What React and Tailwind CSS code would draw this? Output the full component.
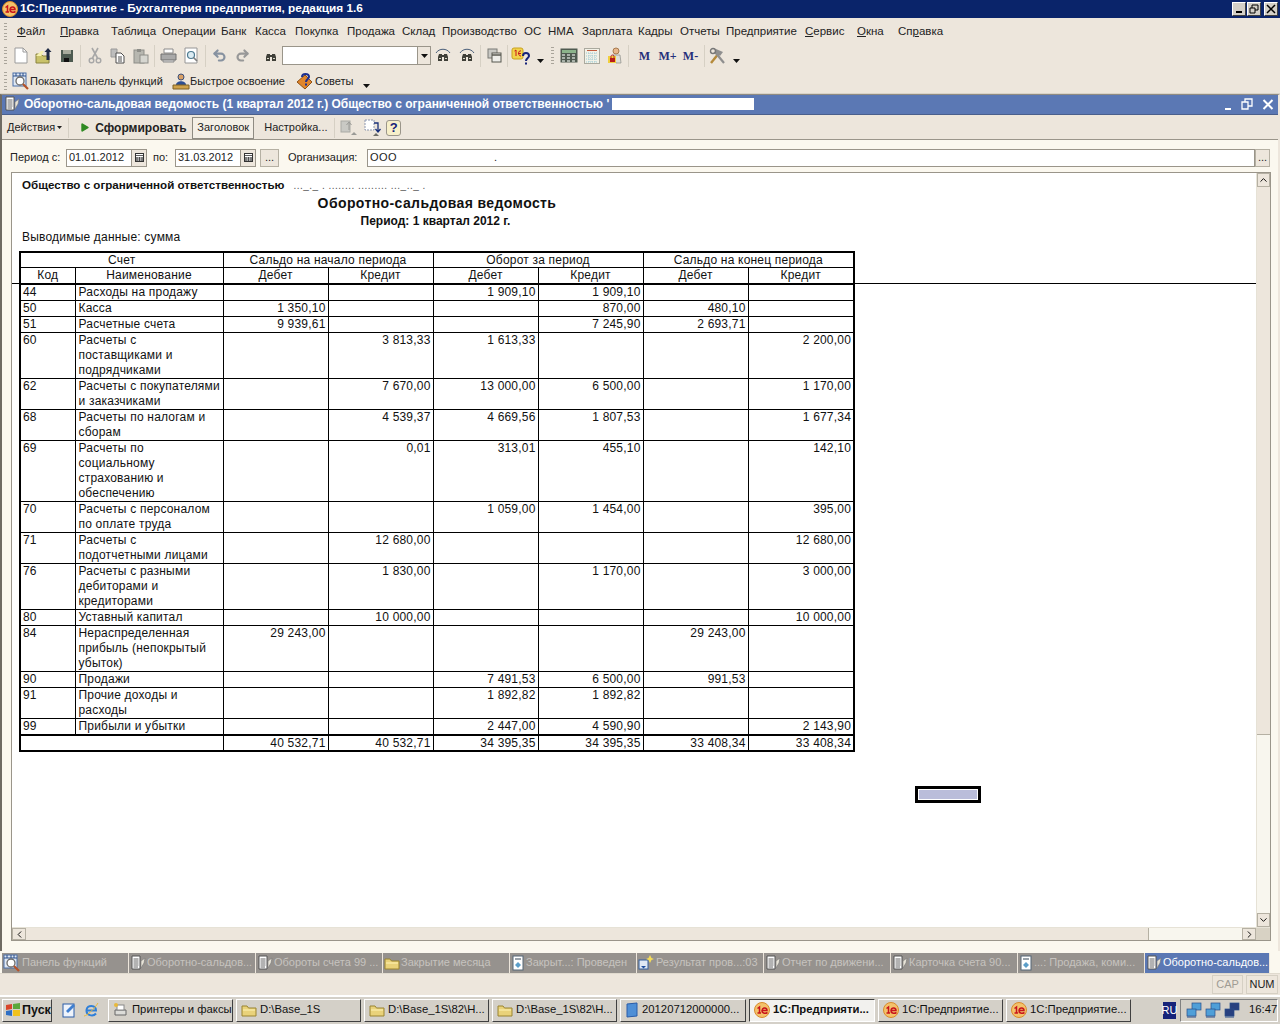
import { Undo2, Redo2, ChevronUp, ChevronDown, ChevronLeft, ChevronRight, Play } from "lucide-react";

const menu = [
  { label: "Файл", u: 0, w: "w-[43px]" },
  { label: "Правка", u: 0, w: "w-[51px]" },
  { label: "Таблица", w: "w-[51px]" },
  { label: "Операции", w: "w-[59px]" },
  { label: "Банк", w: "w-[34px]" },
  { label: "Касса", w: "w-[40px]" },
  { label: "Покупка", w: "w-[52px]" },
  { label: "Продажа", w: "w-[55px]" },
  { label: "Склад", w: "w-[40px]" },
  { label: "Производство", w: "w-[82px]" },
  { label: "ОС", w: "w-[24px]" },
  { label: "НМА", w: "w-[34px]" },
  { label: "Зарплата", w: "w-[56px]" },
  { label: "Кадры", w: "w-[42px]" },
  { label: "Отчеты", w: "w-[46px]" },
  { label: "Предприятие", w: "w-[79px]" },
  { label: "Сервис", u: 0, w: "w-[52px]" },
  { label: "Окна", u: 0, w: "w-[41px]" },
  { label: "Справка", u: 2, w: "w-[60px]" },
];

const rows = [
  ["44", "Расходы на продажу", "", "", "1 909,10", "1 909,10", "", "", "h-[16px]"],
  ["50", "Касса", "1 350,10", "", "", "870,00", "480,10", "", "h-[16px]"],
  ["51", "Расчетные счета", "9 939,61", "", "", "7 245,90", "2 693,71", "", "h-[16px]"],
  ["60", "Расчеты с\nпоставщиками и\nподрядчиками", "", "3 813,33", "1 613,33", "", "", "2 200,00", "h-[46px]"],
  ["62", "Расчеты с покупателями\nи заказчиками", "", "7 670,00", "13 000,00", "6 500,00", "", "1 170,00", "h-[31px]"],
  ["68", "Расчеты по налогам и\nсборам", "", "4 539,37", "4 669,56", "1 807,53", "", "1 677,34", "h-[31px]"],
  ["69", "Расчеты по\nсоциальному\nстрахованию и\nобеспечению", "", "0,01", "313,01", "455,10", "", "142,10", "h-[61px]"],
  ["70", "Расчеты с персоналом\nпо оплате труда", "", "", "1 059,00", "1 454,00", "", "395,00", "h-[31px]"],
  ["71", "Расчеты с\nподотчетными лицами", "", "12 680,00", "", "", "", "12 680,00", "h-[31px]"],
  ["76", "Расчеты с разными\nдебиторами и\nкредиторами", "", "1 830,00", "", "1 170,00", "", "3 000,00", "h-[46px]"],
  ["80", "Уставный капитал", "", "10 000,00", "", "", "", "10 000,00", "h-[16px]"],
  ["84", "Нераспределенная\nприбыль (непокрытый\nубыток)", "29 243,00", "", "", "", "29 243,00", "", "h-[46px]"],
  ["90", "Продажи", "", "", "7 491,53", "6 500,00", "991,53", "", "h-[16px]"],
  ["91", "Прочие доходы и\nрасходы", "", "", "1 892,82", "1 892,82", "", "", "h-[31px]"],
  ["99", "Прибыли и убытки", "", "", "2 447,00", "4 590,90", "", "2 143,90", "h-[16px]"],
];

const totals = ["40 532,71", "40 532,71", "34 395,35", "34 395,35", "33 408,34", "33 408,34"];

const tabs = [
  { label: "Панель функций", icon: "panel" },
  { label: "Оборотно-сальдов...", icon: "doc" },
  { label: "Обороты счета 99 ...", icon: "doc" },
  { label: "Закрытие месяца", icon: "folder" },
  { label: "Закрыт...: Проведен", icon: "calc" },
  { label: "Результат пров...:03", icon: "star" },
  { label: "Отчет по движени...", icon: "doc" },
  { label: "Карточка счета 90...", icon: "doc" },
  { label: "...: Продажа, коми...", icon: "calc" },
  { label: "Оборотно-сальдов...", icon: "doc", active: true },
];

const raised = "border border-t-white border-l-white border-r-[#404040] border-b-[#404040] bg-[#d4d0c8]";

function Logo1C({ size = 16 }) {
  return (
    <svg width={size} height={size} viewBox="0 0 16 16" className="shrink-0">
      <circle cx="8" cy="8" r="7.5" fill="#f3c26a" stroke="#d98a2b" />
      <path d="M3.5 6.5 L5.5 5 V11 M3.5 11 H7" stroke="#c8141c" strokeWidth="1.5" fill="none" />
      <path d="M7.5 8.5 H13 C13 5.5 8.5 5 8 8.5 C7.7 11 11 12 13.5 10.5" stroke="#c8141c" strokeWidth="1.5" fill="none" />
    </svg>
  );
}

function DocIcon() {
  return (
    <svg width="16" height="16" viewBox="0 0 16 16" className="shrink-0">
      <path d="M2 1 H10 V14 H2 Z" fill="#fff" stroke="#555" />
      <path d="M3.5 4 H8.5 M3.5 6 H8.5 M3.5 8 H8.5 M3.5 10 H8.5 M3.5 12 H8" stroke="#666" />
      <path d="M11 6 L15 3 L14 8 L11 13 Z" fill="#e8e4d8" stroke="#777" strokeWidth="0.6" />
    </svg>
  );
}

function PanelIcon() {
  return (
    <svg width="18" height="18" viewBox="0 0 18 18" className="shrink-0">
      <rect x="1" y="1" width="13" height="13" fill="#dfe8f4" stroke="#4a6fa8" />
      <path d="M1 4 H14 M4 1 V4 M8 1 V4 M11 1 V4" stroke="#2b4f8a" />
      <circle cx="8" cy="9" r="4" fill="#fff" stroke="#6a6a6a" strokeWidth="1.3" />
      <path d="M11 12 L16 17" stroke="#b5532a" strokeWidth="2.2" />
    </svg>
  );
}

function FolderIcon({ className = "" }) {
  return (
    <svg width="16" height="14" viewBox="0 0 16 14" className={"shrink-0 " + className}>
      <path d="M1 3 H6 L7.5 5 H15 V13 H1 Z" fill="#e9d27a" stroke="#9a8430" />
      <path d="M2 7 H14" stroke="#fff3b5" />
    </svg>
  );
}

function CalcTabIcon() {
  return (
    <svg width="14" height="16" viewBox="0 0 14 16" className="shrink-0">
      <rect x="2" y="1" width="10" height="14" fill="#fff" stroke="#567" />
      <path d="M4 4 H10" stroke="#345" />
      <path d="M7 7 L10 10 L7 13 L4 10 Z" fill="#5b9ec9" />
    </svg>
  );
}

function StarIcon() {
  return (
    <svg width="17" height="17" viewBox="0 0 17 17" className="shrink-0">
      <rect x="1" y="6" width="9" height="9" fill="#dfe8f4" stroke="#345f9a" />
      <path d="M3 12 L5.5 14.5 L8 12 Z" fill="#1f4f9f" />
      <path d="M12 1 L13.5 4 L16 5 L13.5 6 L12 9 L10.5 6 L8 5 L10.5 4 Z" fill="#f5dc5a" />
    </svg>
  );
}

const tabIcons = {
  panel: <PanelIcon />,
  doc: <DocIcon />,
  folder: <FolderIcon />,
  calc: <CalcTabIcon />,
  star: <StarIcon />,
};

function Grip({ className = "" }) {
  return (
    <div className={"w-[3px] h-[18px] shrink-0 flex flex-col justify-between " + className}>
      {[0, 1, 2, 3, 4, 5].map((i) => (
        <div key={i} className="h-[1px] bg-[#a9a49a]" />
      ))}
    </div>
  );
}

function Sep() {
  return (
    <div className="w-[5px] h-[22px] shrink-0 flex justify-center">
      <div className="w-[1px] bg-[#d6d0c4]" />
    </div>
  );
}

function Slot({ children, w = "w-[23px]" }) {
  return <div className={"h-[24px] shrink-0 flex items-center justify-center " + w}>{children}</div>;
}

function DownArrow() {
  return (
    <svg width="7" height="4" viewBox="0 0 7 4" className="shrink-0 mt-[10px]">
      <path d="M0 0 H7 L3.5 4 Z" fill="#111" />
    </svg>
  );
}

function Binoculars({ arc }) {
  return (
    <svg width="16" height="16" viewBox="0 0 16 16">
      {arc && <path d="M1 5 C4 0 12 0 15 5" stroke="#4a5f7a" fill="none" />}
      <path d="M4 6 H7 V13 H3 V9 Z M9 6 H12 L13 9 V13 H9 Z" fill="#3f3f38" />
      <path d="M7 8 H9" stroke="#3f3f38" strokeWidth="2" />
      <path d="M4 10.5 H6 M10 10.5 H12" stroke="#d8d8c8" />
    </svg>
  );
}

function ToolbarMain() {
  return (
    <div className="h-[25px] flex items-center pl-[4px] bg-[#ede6dc]">
      <Grip className="mr-[2px]" />
      <Slot>
        <svg width="14" height="17" viewBox="0 0 14 17">
          <path d="M1 1 H9 L13 5 V16 H1 Z" fill="#fff" stroke="#9b9b9b" />
          <path d="M9 1 V5 H13" fill="none" stroke="#9b9b9b" />
        </svg>
      </Slot>
      <Slot>
        <svg width="18" height="17" viewBox="0 0 18 17">
          <path d="M1 7 H6 L8 9 H14 V16 H1 Z" fill="#c9c26a" stroke="#8a8440" />
          <path d="M1 9 L6 4 H9 L6 9 Z" fill="#f4f0b0" />
          <path d="M13 1 L16.5 5 H14.5 V13 H11.5 V5 H9.5 Z" fill="#1f2a44" />
        </svg>
      </Slot>
      <Slot>
        <svg width="14" height="14" viewBox="0 0 14 14">
          <rect x="1" y="1" width="12" height="12" fill="#4d5a50" />
          <rect x="3" y="1" width="8" height="4" fill="#a8ab9d" />
          <rect x="4" y="9" width="5" height="4" fill="#111" />
        </svg>
      </Slot>
      <Sep />
      <Slot>
        <svg width="14" height="17" viewBox="0 0 14 17">
          <path d="M4 1 L9.5 11 M10 1 L4.5 11" stroke="#a7a7a7" strokeWidth="1.6" />
          <circle cx="3.5" cy="13.5" r="2.3" fill="none" stroke="#a7a7a7" strokeWidth="1.4" />
          <circle cx="10.5" cy="13.5" r="2.3" fill="none" stroke="#a7a7a7" strokeWidth="1.4" />
        </svg>
      </Slot>
      <Slot>
        <svg width="16" height="16" viewBox="0 0 16 16">
          <path d="M1 1 H7 V9 H1 Z" fill="#bdbdbd" stroke="#9a9a9a" />
          <path d="M6 5 H11 L14 8 V15 H6 Z" fill="#fff" stroke="#4c4c4c" />
          <path d="M8 9 H12 M8 11 H12 M8 13 H12" stroke="#4c4c4c" />
        </svg>
      </Slot>
      <Slot>
        <svg width="16" height="16" viewBox="0 0 16 16">
          <rect x="1" y="2" width="10" height="13" fill="#b7b7b0" stroke="#8d8d88" />
          <rect x="4" y="1" width="4" height="3" fill="#8d8d88" />
          <rect x="7" y="7" width="8" height="8" fill="#d6d6d0" stroke="#8d8d88" />
        </svg>
      </Slot>
      <Sep />
      <Slot>
        <svg width="17" height="15" viewBox="0 0 17 15">
          <path d="M4 1 H13 V5 H4 Z" fill="#fff" stroke="#8a8a8a" />
          <path d="M1 6 H16 V12 H1 Z" fill="#a9a9a9" stroke="#707070" />
          <path d="M3 12 H14 V14 H3 Z" fill="#dadada" stroke="#8a8a8a" />
        </svg>
      </Slot>
      <Slot>
        <svg width="15" height="17" viewBox="0 0 15 17">
          <path d="M1 1 H13 V16 H1 Z" fill="#fff" stroke="#969696" />
          <circle cx="7" cy="8" r="3.5" fill="#dcecf3" stroke="#4d7a90" strokeWidth="1.2" />
          <path d="M9.5 10.5 L13 14" stroke="#7d7d7d" strokeWidth="1.6" />
        </svg>
      </Slot>
      <Sep />
      <Slot><Undo2 size={15} strokeWidth={3.4} className="text-[#8792a0]" /></Slot>
      <Slot><Redo2 size={15} strokeWidth={3.4} className="text-[#989898]" /></Slot>
      <div className="w-[5px] shrink-0" />
      <Slot><Binoculars /></Slot>
      <div className="w-[149px] h-[19px] shrink-0 flex bg-white border border-[#9a958a]">
        <div className="flex-1" />
        <div className="w-[13px] bg-[#ede6dc] border-l border-[#9a958a] flex items-center justify-center">
          <svg width="7" height="4" viewBox="0 0 7 4"><path d="M0 0 H7 L3.5 4 Z" fill="#111" /></svg>
        </div>
      </div>
      <Slot w="w-[24px]"><Binoculars arc="r" /></Slot>
      <Slot><Binoculars arc="l" /></Slot>
      <Sep />
      <Slot w="w-[22px]">
        <svg width="15" height="15" viewBox="0 0 15 15">
          <rect x="1" y="1" width="9" height="9" fill="#c9c9c4" stroke="#7b7b76" />
          <rect x="5" y="5" width="9" height="9" fill="#eeeeea" stroke="#57574f" />
          <path d="M5 7 H14" stroke="#57574f" strokeWidth="1.5" />
        </svg>
      </Slot>
      <Sep />
      <div className="w-[27px] shrink-0 flex items-center pl-[1px]">
        <svg width="20" height="18" viewBox="0 0 20 18">
          <rect x="1" y="1" width="11" height="11" rx="2" fill="#f1d34b" stroke="#c9a21e" />
          <path d="M3.5 4 L5 3 V9 M7 6.5 H10 M10 4 C7 3 6.5 9 10 9" stroke="#c8141c" fill="none" />
          <path d="M12 9 C12 5 18 5 18 9 C18 11 15 11 15 14" stroke="#16237a" strokeWidth="2" fill="none" />
          <rect x="14" y="15.5" width="2" height="2" fill="#16237a" />
        </svg>
      </div>
      <DownArrow />
      <div className="w-[7px] shrink-0" />
      <Grip />
      <div className="w-[3px] shrink-0" />
      <Slot>
        <svg width="18" height="15" viewBox="0 0 18 15">
          <rect x="0.5" y="0.5" width="17" height="14" fill="#4f5a50" />
          <rect x="2" y="2" width="14" height="3" fill="#8bb38a" />
          <path d="M2 7 H5 M7 7 H10 M12 7 H15 M2 10 H5 M7 10 H10 M12 10 H15 M2 13 H5 M7 13 H10 M12 13 H15" stroke="#c8cec6" strokeWidth="1.5" />
        </svg>
      </Slot>
      <Slot>
        <svg width="16" height="16" viewBox="0 0 16 16">
          <rect x="0.5" y="0.5" width="15" height="15" fill="#f2f1e7" stroke="#aaa99e" />
          <path d="M3 2.5 H13" stroke="#c05a3c" />
          <path d="M2 5 H14 M2 8 H14 M2 11 H14 M2 14 H14 M5 5 V14 M8 5 V14 M11 5 V14" stroke="#9ecbd4" strokeDasharray="1 1" />
        </svg>
      </Slot>
      <Slot>
        <svg width="15" height="17" viewBox="0 0 15 17">
          <circle cx="9" cy="4" r="3" fill="#e8b78c" stroke="#a77a4e" />
          <path d="M6 8 H13 L14 16 H9 Z" fill="#dfe0da" stroke="#8b8b85" strokeWidth="0.7" />
          <path d="M1 9 H9 V16 H1 Z" fill="#f1cf3d" />
          <rect x="3" y="11" width="5" height="4" fill="#b71c1c" />
          <path d="M4 11 V9.5 C4 7.5 7 7.5 7 9.5 V11" stroke="#b71c1c" fill="none" />
        </svg>
      </Slot>
      <Sep />
      <div className="ml-[2px] flex items-center shrink-0 font-['Liberation_Serif',serif] font-bold text-[12px] text-[#26307a] w-[69px]">
        <span className="w-[23px] text-center">M</span>
        <span className="w-[23px] text-center">M+</span>
        <span className="w-[23px] text-center">M-</span>
      </div>
      <Sep />
      <Slot w="w-[20px]">
        <svg width="18" height="18" viewBox="0 0 18 18">
          <path d="M3 16 L11 6" stroke="#b58a3a" strokeWidth="2.4" />
          <path d="M16 16 L7 5" stroke="#8f8f8f" strokeWidth="2.2" />
          <path d="M8 2 L15 5 L12 9 L7 5 Z" fill="#8f8f8f" />
          <circle cx="5" cy="4" r="2.5" fill="none" stroke="#777" strokeWidth="1.4" />
        </svg>
      </Slot>
      <div className="w-[6px] shrink-0" />
      <DownArrow />
    </div>
  );
}

function ToolbarFunctions() {
  return (
    <div className="h-[26px] flex items-center pl-[4px] pt-[1px] bg-[#ede6dc] border-b border-[#d9d3c8] text-[#222]">
      <Grip className="mr-[5px]" />
      <PanelIcon />
      <span className="w-[142px]">Показать панель функций</span>
      <svg width="18" height="17" viewBox="0 0 18 17" className="shrink-0">
        <circle cx="9" cy="4" r="3" fill="#d9a066" stroke="#3a4f7a" />
        <path d="M4 12 C4 7 14 7 14 12 Z" fill="#2d4f92" />
        <path d="M1 12 H17 V16 H1 Z" fill="#cfa24a" stroke="#7f6226" />
      </svg>
      <span className="w-[105px]">Быстрое освоение</span>
      <svg width="18" height="18" viewBox="0 0 18 18" className="shrink-0 ml-[1px]">
        <path d="M1 10 L9 3 L16 10 L9 17 Z" fill="#e0852c" stroke="#8f5216" />
        <path d="M6 5 C6 1 13 1 13 5 C13 7 10 7 10 10" stroke="#1d2f8f" strokeWidth="2" fill="none" />
        <rect x="9" y="11.5" width="2" height="2" fill="#1d2f8f" />
      </svg>
      <span className="ml-[1px]">Советы</span>
      <div className="w-[10px]" />
      <DownArrow />
    </div>
  );
}

function ReportTable() {
  const cell = "border border-black px-[2px] align-top whitespace-pre";
  const num = cell + " text-right";
  const head = "border border-black font-normal text-center align-middle leading-[14px]";
  return (
    <table className="table-fixed w-[836px] border-collapse border-2 border-black leading-[15px] ml-[-3px]">
      <colgroup>
        <col className="w-[55px]" />
        <col className="w-[148px]" />
        <col className="w-[105px]" />
        <col className="w-[105px]" />
        <col className="w-[105px]" />
        <col className="w-[105px]" />
        <col className="w-[105px]" />
        <col className="w-[106px]" />
      </colgroup>
      <thead>
        <tr className="h-[14px]">
          <th colSpan={2} className={head}>Счет</th>
          <th colSpan={2} className={head}>Сальдо на начало периода</th>
          <th colSpan={2} className={head}>Оборот за период</th>
          <th colSpan={2} className={head}>Сальдо на конец периода</th>
        </tr>
        <tr className="h-[16px]">
          <th className={head + " border-b-2"}>Код</th>
          <th className={head + " border-b-2"}>Наименование</th>
          <th className={head + " border-b-2"}>Дебет</th>
          <th className={head + " border-b-2"}>Кредит</th>
          <th className={head + " border-b-2"}>Дебет</th>
          <th className={head + " border-b-2"}>Кредит</th>
          <th className={head + " border-b-2"}>Дебет</th>
          <th className={head + " border-b-2"}>Кредит</th>
        </tr>
      </thead>
      <tbody>
        {rows.map((r) => (
          <tr key={r[0]} className={r[8]}>
            <td className={cell}>{r[0]}</td>
            <td className={cell + " pl-[3px]"}>{r[1]}</td>
            {r.slice(2, 8).map((v, i) => (
              <td key={i} className={num}>{v}</td>
            ))}
          </tr>
        ))}
        <tr className="h-[15px]">
          <td colSpan={2} className={cell + " border-t-2"}></td>
          {totals.map((v, i) => (
            <td key={i} className={num + " border-t-2 leading-[14px]"}>{v}</td>
          ))}
        </tr>
      </tbody>
    </table>
  );
}

function ChildWindow() {
  return (
    <div className="h-[857px] flex flex-col border-l-2 border-[#6f6b63] border-t border-t-[#8f8b82] border-r-2 border-r-[#ede6dc] bg-[#fbf8ef]">
      <div className="h-[20px] shrink-0 flex items-center pb-[1px] bg-[#5b78b4] text-white font-bold text-[12px] border-b border-[#4a5f8c]">
        <div className="ml-[2px]"><DocIcon /></div>
        <span className="ml-[4px] whitespace-nowrap w-[590px]">Оборотно-сальдовая ведомость (1 квартал 2012 г.) Общество с ограниченной ответственностью '</span>
        <div className="w-[142px] h-[12px] bg-white ml-[-2px]" />
        <div className="flex-1" />
        <svg width="58" height="14" viewBox="0 0 58 14" className="mr-[2px] shrink-0">
          <path d="M7 12 H13" stroke="#fff" strokeWidth="2" />
          <path d="M24 5 H30 V12 H24 Z M27 5 V2 H34 V9 H30" fill="none" stroke="#fff" strokeWidth="1.3" />
          <path d="M45.5 3 L54.5 12 M54.5 3 L45.5 12" stroke="#fff" strokeWidth="2" />
        </svg>
      </div>
      <div className="h-[25px] shrink-0 flex items-center pt-[1px] bg-[#ede6dc] border-b border-[#9a958a] text-[#222]">
        <span className="ml-[5px]">Действия</span>
        <svg width="5" height="3" viewBox="0 0 5 3" className="ml-[2px]"><path d="M0 0 H5 L2.5 3 Z" fill="#222" /></svg>
        <div className="w-[1px] h-[20px] bg-[#d6d0c4] ml-[6px]" />
        <Play size={11} fill="#2f8a22" strokeWidth={0} className="ml-[10px] text-[#2f8a22]" />
        <span className="ml-[5px] w-[92px] font-bold text-[12px]">Сформировать</span>
        <div className="ml-[5px] w-[62px] h-[22px] border border-[#8f8b82] bg-[#f4efe6] flex items-center justify-center">Заголовок</div>
        <span className="ml-[10px] w-[70px]">Настройка...</span>
        <div className="w-[1px] h-[20px] bg-[#d6d0c4]" />
        <svg width="18" height="18" viewBox="0 0 18 18" className="ml-[5px]">
          <rect x="1" y="2" width="9" height="11" fill="#c9c9c4" stroke="#a9a9a4" />
          <path d="M9 11 V4 M6.5 6 L9 3 L11.5 6" stroke="#9a9a96" fill="none" />
          <path d="M11 16 H17 L14 13 Z" fill="#9a9a96" />
        </svg>
        <svg width="18" height="18" viewBox="0 0 18 18" className="ml-[6px]">
          <rect x="1" y="1" width="9" height="10" fill="#fff" stroke="#8c97b0" strokeDasharray="2 1" />
          <path d="M10 4 H14 V12 M11.5 10 L14 13 L16.5 10" stroke="#18307a" fill="none" strokeWidth="1.3" />
          <path d="M9 17 H15 L12 14 Z" fill="#6d6d66" />
        </svg>
        <div className="ml-[4px] w-[15px] h-[16px] rounded-[3px] border border-[#9a958a] bg-[#f7efc9] flex items-center justify-center font-bold text-[#16237a] text-[13px]">?</div>
      </div>
      <div className="h-[32px] shrink-0 flex items-center pt-[3px] text-[#222]">
        <span className="ml-[8px] w-[56px]">Период с:</span>
        <div className="w-[81px] h-[18px] bg-white border border-[#9a958a] flex items-center pl-[2px]">
          <span className="flex-1">01.01.2012</span>
          <CalBtn />
        </div>
        <span className="ml-[6px] w-[22px]">по:</span>
        <div className="w-[81px] h-[18px] bg-white border border-[#9a958a] flex items-center pl-[2px]">
          <span className="flex-1">31.03.2012</span>
          <CalBtn />
        </div>
        <Dots className="ml-[4px] w-[19px]" />
        <span className="ml-[9px] w-[79px]">Организация:</span>
        <div className="w-[888px] h-[18px] bg-white border border-[#9a958a] flex items-center pl-[2px]">
          <span className="w-[124px] tracking-[0.5px]">ООО</span>
          <span>.</span>
        </div>
        <Dots className="w-[15px]" />
      </div>
      <div className="flex-1 min-h-0 ml-[9px] mr-[7px] mb-[10px] border border-[#9a958a] flex flex-col bg-white">
        <div className="flex-1 min-h-0 flex">
          <div className="relative flex-1 min-w-0 overflow-hidden pl-[10px] pt-[4px] font-['Liberation_Sans',sans-serif] text-[12px] tracking-[0.2px] text-[#111]">
            <div className="h-[16px] whitespace-nowrap font-bold leading-[16px] tracking-[0px] text-[11.6px]">
              Общество с ограниченной ответственностью
              <span className="ml-[9px] font-normal text-[#555] text-[10px] tracking-[0.5px]">..._._ . ........ ......... ..._.._ .</span>
            </div>
            <div className="w-[830px] text-center font-bold text-[14px] leading-[20px] tracking-[0.4px]">Оборотно-сальдовая ведомость</div>
            <div className="w-[827px] text-center font-bold leading-[16px] tracking-[0px]">Период: 1 квартал 2012 г.</div>
            <div className="h-[16px] leading-[16px]">Выводимые данные: сумма</div>
            <div className="mt-[6px]">
              <ReportTable />
            </div>
            <div className="absolute left-0 right-0 top-[110px] h-[1px] bg-black" />
            <div className="absolute left-[903px] top-[613px] w-[66px] h-[17px] border-[3px] border-black bg-[#babdda] outline outline-white -outline-offset-4" />
          </div>
          <div className="w-[14px] shrink-0 flex flex-col bg-[#f8f6ee] border-l border-[#e6e2d6]">
            <ScrollBtn><ChevronUp size={12} strokeWidth={2} /></ScrollBtn>
            <div className="h-[548px] bg-[#ede6dc] border-b border-[#b5b0a3]" />
            <div className="flex-1" />
            <ScrollBtn><ChevronDown size={12} strokeWidth={2} /></ScrollBtn>
          </div>
        </div>
        <div className="h-[13px] shrink-0 flex bg-[#f8f6ee] border-t border-[#e6e2d6]">
          <div className="w-[14px] flex items-center justify-center bg-[#ede6dc] border border-[#b5b0a3]"><ChevronLeft size={11} strokeWidth={2} /></div>
          <div className="w-[1123px] bg-[#ede6dc] border-r border-[#b5b0a3]" />
          <div className="flex-1" />
          <div className="w-[14px] flex items-center justify-center bg-[#ede6dc] border border-[#b5b0a3]"><ChevronRight size={11} strokeWidth={2} /></div>
          <div className="w-[14px] bg-[#d8d2c4]" />
        </div>
      </div>
    </div>
  );
}

function CalBtn() {
  return (
    <div className="w-[15px] h-full bg-[#ede6dc] border-l border-[#9a958a] flex items-center justify-center">
      <svg width="9" height="9" viewBox="0 0 9 9">
        <rect x="0.5" y="0.5" width="8" height="8" fill="#fff" stroke="#333" />
        <path d="M0 2.5 H9 M2 4 V9 M4.5 4 V9 M7 4 V9 M0 5 H9 M0 7 H9" stroke="#333" strokeWidth="0.8" />
      </svg>
    </div>
  );
}

function Dots({ className = "" }) {
  return (
    <div className={"h-[18px] bg-[#ede6dc] border border-[#b5b0a3] flex items-center justify-center leading-none " + className}>...</div>
  );
}

function ScrollBtn({ children }) {
  return <div className="h-[14px] shrink-0 flex items-center justify-center bg-[#ede6dc] border border-[#b5b0a3]">{children}</div>;
}

function TabsBar() {
  return (
    <div className="h-[23px] flex pl-[2px] pt-[2px] bg-[#fbf8ef] border-b border-[#e0dace]">
      {tabs.map((t, i) => (
        <div
          key={i}
          className={
            "h-[20px] shrink-0 flex items-center pl-[1px] pb-[1px] whitespace-nowrap overflow-hidden border-r border-[#ede6dc] " +
            (t.active ? "w-[125px] bg-[#5b78b4] text-white" : "w-[127px] bg-[#96928e] text-[#c6c3bf]")
          }
        >
          {tabIcons[t.icon]}
          <span className="ml-[1px]">{t.label}</span>
        </div>
      ))}
    </div>
  );
}

function StatusBar() {
  return (
    <div className="h-[21px] flex items-center justify-end bg-[#ede6dc] text-[#222] pr-[2px]">
      <div className="w-[31px] h-[19px] flex items-center justify-center text-[#a09c94] border border-[#d6d0c4]">CAP</div>
      <div className="ml-[3px] w-[32px] h-[19px] flex items-center justify-center border border-[#d6d0c4]">NUM</div>
    </div>
  );
}

function TaskBtn({ children, active, w = "w-[125px]", icon }) {
  return (
    <div
      className={
        "h-[23px] shrink-0 flex items-center pl-[4px] whitespace-nowrap overflow-hidden " + w + " " +
        (active
          ? "border border-t-[#404040] border-l-[#404040] border-r-white border-b-white bg-[#f2f1ee] font-bold"
          : raised)
      }
    >
      {icon}
      <span className="ml-[3px]">{children}</span>
    </div>
  );
}

function Net({ c, className = "" }) {
  return (
    <svg width="16" height="16" viewBox="0 0 16 16" className={"shrink-0 " + className}>
      <rect x="6" y="1" width="9" height="7" fill={c} stroke="#2a4f8a" strokeWidth="0.7" />
      <rect x="1" y="7" width="9" height="7" fill={c} stroke="#2a4f8a" strokeWidth="0.7" />
      <path d="M1 15 H10" stroke="#2a4f8a" />
    </svg>
  );
}

function Taskbar() {
  return (
    <div className="flex-1 flex items-center pb-[1px] bg-[#d4d0c8] border-t-2 border-t-white pl-[2px] text-[#111] text-[11.3px]">
      <div className={"w-[50px] h-[23px] shrink-0 flex items-center pl-[2px] font-bold text-[12.5px] " + raised}>
        <svg width="16" height="16" viewBox="0 0 16 16" className="shrink-0">
          <path d="M1 3 L7 2 V7 L1 8 Z" fill="#d8452a" />
          <path d="M8 2 L15 1 V7 L8 7 Z" fill="#5aa83a" />
          <path d="M1 9 L7 8 V14 L1 13 Z" fill="#2f6fc4" />
          <path d="M8 8 L15 8 V14 L8 14 Z" fill="#f0c21e" />
        </svg>
        <span className="ml-[1px]">Пуск</span>
      </div>
      <div className="w-[56px] shrink-0 flex items-center justify-center gap-[6px]">
        <svg width="16" height="16" viewBox="0 0 16 16">
          <rect x="2" y="2" width="11" height="13" fill="#eef3fb" stroke="#2a5ca8" />
          <path d="M5 9 L12 2 L14 4 L7 11 Z" fill="#3f7fd0" />
        </svg>
        <svg width="16" height="16" viewBox="0 0 16 16">
          <path d="M3 8.5 H13 C13 2.5 4 2.5 3.5 8 C3 13.5 10 15 13 11.5" stroke="#2f7fd8" strokeWidth="2" fill="none" />
          <path d="M1 14 C4 14 12 6 15 1" stroke="#e8b93a" fill="none" />
        </svg>
      </div>
      <TaskBtn icon={
        <svg width="16" height="16" viewBox="0 0 16 16" className="shrink-0">
          <path d="M2 8 H13 V13 H2 Z" fill="#dcdcd8" stroke="#666" />
          <rect x="4" y="3" width="7" height="5" fill="#fff" stroke="#888" />
          <circle cx="3" cy="3" r="2" fill="#e8b93a" />
        </svg>
      }>Принтеры и факсы</TaskBtn>
      <div className="w-[3px] shrink-0" />
      <TaskBtn icon={<FolderIcon />}>D:\Base_1S</TaskBtn>
      <div className="w-[3px] shrink-0" />
      <TaskBtn icon={<FolderIcon />}>D:\Base_1S\82\H...</TaskBtn>
      <div className="w-[3px] shrink-0" />
      <TaskBtn icon={<FolderIcon />}>D:\Base_1S\82\H...</TaskBtn>
      <div className="w-[3px] shrink-0" />
      <TaskBtn w="w-[126px]" icon={
        <svg width="14" height="16" viewBox="0 0 14 16" className="shrink-0">
          <path d="M2 2 L12 1 V14 L2 15 Z" fill="#4f8fd6" stroke="#2a5ca8" />
        </svg>
      }>20120712000000...</TaskBtn>
      <div className="w-[3px] shrink-0" />
      <TaskBtn active w="w-[126px]" icon={<Logo1C />}>1С:Предприяти...</TaskBtn>
      <div className="w-[3px] shrink-0" />
      <TaskBtn icon={<Logo1C />}>1С:Предприятие...</TaskBtn>
      <div className="w-[3px] shrink-0" />
      <TaskBtn icon={<Logo1C />}>1С:Предприятие...</TaskBtn>
      <div className="w-[32px] shrink-0" />
      <div className="w-[13px] h-[17px] shrink-0 bg-[#16237a] text-white text-[11px] flex items-center justify-center">RU</div>
      <div className="ml-[4px] w-[98px] h-[23px] shrink-0 flex items-center pl-[5px] border border-t-[#808080] border-l-[#808080] border-r-white border-b-white">
        <Net c="#4f9fd8" />
        <Net c="#4f9fd8" className="ml-[3px]" />
        <Net c="#27407f" className="ml-[3px]" />
        <span className="ml-[9px]">16:47</span>
      </div>
    </div>
  );
}

export default function App() {
  return (
    <div className="w-[1280px] h-[1024px] flex flex-col overflow-hidden bg-[#ede6dc] font-['Liberation_Sans',sans-serif] text-[11px] leading-none">
      <div className="h-[18px] shrink-0 flex items-center bg-[#0a246a] text-white font-bold text-[11.8px]">
        <div className="ml-[2px]"><Logo1C /></div>
        <span className="ml-[2px] flex-1">1С:Предприятие - Бухгалтерия предприятия, редакция 1.6</span>
        <div className={"w-[14px] h-[14px] flex items-end justify-center pb-[2px] " + raised}><div className="w-[6px] h-[2px] bg-black" /></div>
        <div className={"w-[14px] h-[14px] ml-[1px] flex items-center justify-center " + raised}>
          <svg width="10" height="10" viewBox="0 0 10 10"><path d="M1 4 H6 V9 H1 Z M3 4 V1 H9 V6 H6" fill="none" stroke="#000" /></svg>
        </div>
        <div className={"w-[14px] h-[14px] ml-[3px] mr-[2px] flex items-center justify-center " + raised}>
          <svg width="10" height="10" viewBox="0 0 10 10"><path d="M1 1 L9 9 M9 1 L1 9" stroke="#000" strokeWidth="1.5" /></svg>
        </div>
      </div>
      <div className="h-[25px] shrink-0 flex items-center pl-[4px] pt-[2px] text-[#222] text-[11.5px]">
        <Grip className="mr-[10px]" />
        {menu.map((m) => (
          <div key={m.label} className={"shrink-0 whitespace-nowrap " + m.w}>
            {m.u === undefined ? m.label : (
              <>
                {m.label.slice(0, m.u)}
                <span className="underline">{m.label[m.u]}</span>
                {m.label.slice(m.u + 1)}
              </>
            )}
          </div>
        ))}
      </div>
      <div className="shrink-0"><ToolbarMain /></div>
      <div className="shrink-0"><ToolbarFunctions /></div>
      <div className="shrink-0"><ChildWindow /></div>
      <div className="shrink-0"><TabsBar /></div>
      <div className="shrink-0"><StatusBar /></div>
      <Taskbar />
    </div>
  );
}
